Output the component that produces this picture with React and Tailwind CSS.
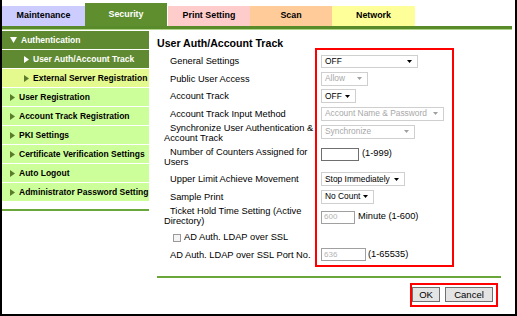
import React from "react";

const Tri = ({ down, color }) =>
  down ? (
    <svg width="7" height="6" viewBox="0 0 7 6" className="shrink-0">
      <path d="M0 0h7L3.5 6z" fill={color} />
    </svg>
  ) : (
    <svg width="5" height="7" viewBox="0 0 5 7" className="shrink-0">
      <path d="M0 0l5 3.5L0 7z" fill={color} />
    </svg>
  );

const Select = ({ w, text, disabled, h = "h-[14px]" }) => (
  <div
    className={`${w} ${h} flex items-center justify-between border border-[#cfcfcf] bg-white pl-[3px] pr-[5px] text-[8.4px] leading-none ${
      disabled ? "text-[#a8a8a8]" : "text-black"
    }`}
  >
    <span className="whitespace-nowrap">{text}</span>
    <svg width="5" height="3" viewBox="0 0 5 3" className="shrink-0">
      <path d="M0 0h5L2.5 3z" fill={disabled ? "#a0a0a0" : "#000"} />
    </svg>
  </div>
);

const Input = ({ w, value, disabled }) => (
  <div
    className={`${w} h-[13px] flex items-center border bg-white pl-[2px] text-[8px] leading-none ${
      disabled ? "border-[#a0a0a0] text-[#b4b4b4]" : "border-[#6f6f6f]"
    }`}
  >
    {value}
  </div>
);

const tabs = [
  { label: "Maintenance", cls: "w-[83px] h-[20px] bg-[#ccccff] text-black" },
  { label: "Security", cls: "w-[82px] h-[23px] bg-[#5e8e2e] text-white" },
  { label: "Print Setting", cls: "w-[82px] h-[20px] bg-[#ffcccc] text-black ml-[1px]" },
  { label: "Scan", cls: "w-[82px] h-[20px] bg-[#ffcc99] text-black" },
  { label: "Network", cls: "w-[83px] h-[20px] bg-[#ffff99] text-black" },
];

const menu = [
  { label: "Authentication", dark: true, down: true },
  { label: "User Auth/Account Track", dark: true, sub: true },
  { label: "External Server Registration", sub: true, hl: true },
  { label: "User Registration" },
  { label: "Account Track Registration" },
  { label: "PKI Settings" },
  { label: "Certificate Verification Settings" },
  { label: "Auto Logout" },
  { label: "Administrator Password Setting" },
];

const Label = ({ children, className = "" }) => (
  <div
    className={`w-[164px] shrink-0 pl-[7px] pr-[6px] indent-[6px] text-[9.3px] leading-[10px] text-black ${className}`}
  >
    {children}
  </div>
);

export default function App() {
  return (
    <div className="relative w-[517px] h-[316px] overflow-hidden bg-white border-l-2 border-r-2 border-b-2 border-black font-['Liberation_Sans',Arial,sans-serif]">
      {/* tabs */}
      <div className="flex items-end pt-[3px]">
        {tabs.map((t) => (
          <div
            key={t.label}
            className={`${t.cls} flex items-center justify-center text-[8.9px] font-bold`}
          >
            {t.label}
          </div>
        ))}
      </div>
      <div className="w-[510px] h-[3px] bg-[#5a8b2a]" />
      <div className="w-[510px] h-[1px] bg-[#afd48a]" />

      <div className="flex">
        {/* sidebar */}
        <div className="w-[147px] shrink-0 pt-[1px]">
          <div className="flex flex-col gap-[1px]">
            {menu.map((m) => (
              <div
                key={m.label}
                className={`h-[18px] flex items-center gap-[4px] whitespace-nowrap text-[8.5px] font-bold ${
                  m.sub ? "pl-[22px]" : "pl-[8px]"
                } ${
                  m.dark
                    ? "bg-[#5f8a32] text-white"
                    : m.hl
                    ? "bg-[#e4f98e] text-black"
                    : "bg-[#ccff99] text-black"
                }`}
              >
                <Tri down={m.down} color={m.dark ? "#fff" : "#5d7b2c"} />
                <span>{m.label}</span>
              </div>
            ))}
          </div>
          <div className="mt-[8px] h-[2px] bg-[#6aa63a]" />
        </div>

        {/* main */}
        <div className="ml-[8px] w-[344px]">
          <div className="mt-[6px] h-[14px] text-[10.6px] font-bold leading-[14px]">
            User Auth/Account Track
          </div>

          <div className="mt-[2px] flex flex-col">
            <div className="h-[18px] flex items-center">
              <Label>General Settings</Label>
              <Select w="w-[97px]" h="h-[13px]" text="OFF" />
            </div>
            <div className="h-[17px] flex items-center">
              <Label>Public User Access</Label>
              <Select w="w-[47px]" text="Allow" disabled />
            </div>
            <div className="h-[18px] flex items-center">
              <Label>Account Track</Label>
              <Select w="w-[35px]" text="OFF" />
            </div>
            <div className="h-[17px] flex items-center">
              <Label>Account Track Input Method</Label>
              <Select w="w-[123px]" text="Account Name & Password" disabled />
            </div>
            <div className="h-[22px] flex items-center">
              <Label>Synchronize User Authentication &amp; Account Track</Label>
              <div className="-mt-[3px]">
                <Select w="w-[94px]" text="Synchronize" disabled />
              </div>
            </div>
            <div className="h-[26px] flex items-center">
              <Label>Number of Counters Assigned for Users</Label>
              <div className="-mt-[6px] flex items-center gap-[3px] text-[9.3px]">
                <Input w="w-[38px]" value="" />
                <span>(1-999)</span>
              </div>
            </div>
            <div className="h-[18px] flex items-center">
              <Label>Upper Limit Achieve Movement</Label>
              <Select w="w-[84px]" text="Stop Immediately" />
            </div>
            <div className="h-[17px] flex items-center">
              <Label>Sample Print</Label>
              <Select w="w-[53px]" text="No Count" />
            </div>
            <div className="h-[25px] flex items-center">
              <Label className="-mt-[3px]">Ticket Hold Time Setting (Active Directory)</Label>
              <div className="-mt-[1px] flex items-center gap-[3px] text-[9.3px]">
                <Input w="w-[34px]" value="600" disabled />
                <span>Minute (1-600)</span>
              </div>
            </div>
            <div className="h-[16px] flex items-center">
              <div className="pl-[16px] flex items-center gap-[3px] text-[9.3px]">
                <div className="w-[8px] h-[8px] border border-[#9a9a9a] bg-[#f4f4f4]" />
                <span>AD Auth. LDAP over SSL</span>
              </div>
            </div>
            <div className="h-[17px] flex items-center">
              <Label>AD Auth. LDAP over SSL Port No.</Label>
              <div className="flex items-center gap-[2px] text-[9.3px]">
                <Input w="w-[45px]" value="636" disabled />
                <span>(1-65535)</span>
              </div>
            </div>
          </div>

          <div className="mt-[13px] h-[2px] bg-[#6aa63a]" />

          <div className="mt-[5px] flex justify-end pr-[3px]">
            <div className="flex gap-[5px] border-2 border-[#ff0000] pl-[0px] pr-[3px] pt-[2px] pb-[3px]">
              <button className="w-[28px] h-[15px] flex items-center justify-center border border-[#707070] bg-[#e4e4e4] text-[9.5px] leading-none">
                OK
              </button>
              <button className="w-[48px] h-[15px] flex items-center justify-center border border-[#707070] bg-[#e4e4e4] text-[9.5px] leading-none">
                Cancel
              </button>
            </div>
          </div>
        </div>
      </div>

      {/* annotation box */}
      <div className="absolute left-[313px] top-[48px] w-[139px] h-[219px] border-2 border-[#ff0000]" />
    </div>
  );
}
